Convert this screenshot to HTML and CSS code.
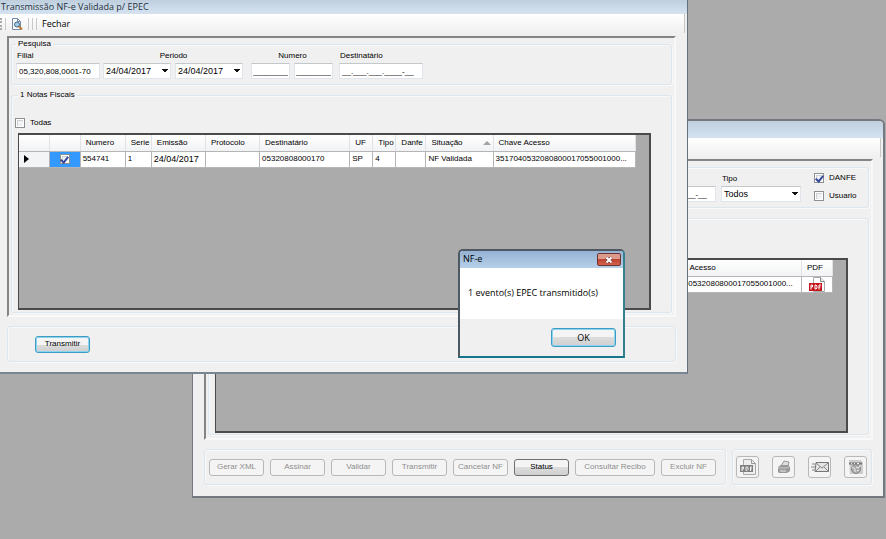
FILE: index.html
```html
<!DOCTYPE html>
<html lang="pt-BR">
<head>
<meta charset="utf-8">
<title>Transmissão NF-e</title>
<link rel="stylesheet" href="styles.css">
</head>
<body>
<main class="desktop">

  <section class="window window-back" aria-label="NF-e">
    <div class="titlebar titlebar-tall"></div>
    <div class="toolbar"></div>
    <div class="panel">
      <div class="group group-plain filters filters-end">
        <input class="text text-long mask-tail" aria-label="Destinatário" value="__.___.___.____-__">
        <div class="field">
          <label for="tipo">Tipo</label>
          <select id="tipo" class="combo combo-wide"><option>Todos</option></select>
        </div>
        <div class="checks">
          <label class="check"><input type="checkbox" checked>DANFE</label>
          <label class="check"><input type="checkbox">Usuario</label>
        </div>
      </div>
      <div class="group group-plain group-back-list">
        <div class="grid">
          <table class="table-end">
            <colgroup><col class="c-chave"><col class="c-pdf"></colgroup>
            <thead><tr><th>Chave Acesso</th><th>PDF</th></tr></thead>
            <tbody><tr>
              <td>3517040532080800017055001000...</td>
              <td class="center">
                <svg class="pdf" viewBox="0 0 16 15" role="img" aria-label="PDF">
                  <path d="M4.500.5h7l4 4v10h-11z" fill="#fff" stroke="#aaa"/>
                  <path d="M11.500.5v4h4" fill="#eee" stroke="#888"/>
                  <path d="M0 6h13v8H0z" fill="#c5161c"/>
                  <path d="M2 12.500V8h1.500v2H2M6 8v4h1l1-1V9L7 8zM10 12.500V8h2M10 10h1.500" fill="none" stroke="#fff"/>
                </svg>
              </td>
            </tr></tbody>
          </table>
        </div>
      </div>
    </div>
    <div class="actions">
      <div class="group group-plain bar">
        <button class="btn" disabled>Gerar XML</button>
        <button class="btn" disabled>Assinar</button>
        <button class="btn" disabled>Validar</button>
        <button class="btn" disabled>Transmitir</button>
        <button class="btn" disabled>Cancelar NF</button>
        <button class="btn">Status</button>
        <button class="btn btn-long" disabled>Consultar Recibo</button>
        <button class="btn" disabled>Excluir NF</button>
      </div>
      <div class="group group-plain bar bar-icons">
        <button class="btn-icon" disabled aria-label="PDF">
          <svg viewBox="0 0 18 18"><path d="M4.500 1.500h8l4 4v11h-12z" fill="#eee" stroke="#aaa"/><path d="M12.500 1.500v4h4" fill="none" stroke="#999"/><path d="M1 7h13v7H1z" fill="#808080"/><path d="M3 13V9h1.500v2H3M7 9v3.500h1l1-1V9.500L8 9zM11.500 13V9H13M11.500 11H13" fill="none" stroke="#eee"/></svg>
        </button>
        <button class="btn-icon" disabled aria-label="Imprimir">
          <svg viewBox="0 0 18 18"><path d="M6 8l3-5 5 1-1 5z" fill="#ddd" stroke="#999"/><path d="M3 9l3-2h7l2 2v4l-3 2H4l-1-1z" fill="#999"/><path d="M3 10h9l3-2" fill="none" stroke="#ccc"/><path d="M5 13h6" stroke="#eee"/></svg>
        </button>
        <button class="btn-icon" disabled aria-label="Enviar e-mail">
          <svg viewBox="0 0 18 18"><path d="M5 4.500h12.500v9H4z" fill="#e4e4e4" stroke="#777"/><path d="M5 5l6 5 6-5M5 13l4-4M17 13l-4-4" fill="none" stroke="#888"/><path d="M1 6h3M0 9h4M1 12h3" stroke="#888"/></svg>
        </button>
        <button class="btn-icon" disabled aria-label="Configurar XML">
          <svg viewBox="0 0 18 18"><path d="M2 2h12l2 3v11H3z" fill="#ccc"/><path d="M2 4.500h13v2H2z" fill="#777"/><path d="M4 5.500h1M7 5.500h1M10 5.500h2" stroke="#eee"/><circle cx="9" cy="11" r="4.500" fill="#aaa" stroke="#888"/><path d="M5 9l3 2v3M9 9l2 1 2-2M10 13l2-1" fill="none" stroke="#eee"/></svg>
        </button>
      </div>
    </div>
  </section>

  <section class="window window-front" aria-label="Transmissão NF-e Validada p/ EPEC">
    <div class="titlebar">Transmissão NF-e Validada p/ EPEC</div>
    <div class="toolbar">
      <span class="grip"></span><span class="sep"></span>
      <button class="tool" aria-label="Pesquisar">
        <svg viewBox="0 0 12 12"><path d="M1.500.5h5l3 3v8h-8z" fill="#fff" stroke="#7289a8"/><path d="M6.500.5v3h3" fill="none" stroke="#7289a8"/><circle cx="6" cy="6.500" r="2.500" fill="#9ed0ee" stroke="#45607c"/><path d="M8 8.500l3 3" stroke="#b9792d" stroke-width="2"/></svg>
      </button>
      <span class="sep"></span><span class="sep"></span><span class="sep"></span>
      <button class="tool">Fechar</button>
    </div>
    <div class="panel">
      <fieldset class="group">
        <legend>Pesquisa</legend>
        <div class="filters">
          <div class="field">
            <label for="filial">Filial</label>
            <input id="filial" class="text text-long" value="05,320,808,0001-70">
          </div>
          <div class="field field-center">
            <label for="de">Periodo</label>
            <div class="pair">
              <select id="de" class="combo"><option>24/04/2017</option></select>
              <select class="combo" aria-label="Periodo até"><option>24/04/2017</option></select>
            </div>
          </div>
          <div class="field field-center field-numero">
            <label for="num">Numero</label>
            <div class="pair">
              <input id="num" class="text text-short" value="________">
              <input class="text text-short" aria-label="Numero até" value="________">
            </div>
          </div>
          <div class="field">
            <label for="dest">Destinatário</label>
            <input id="dest" class="text text-long" value="__.___.___.____-__">
          </div>
        </div>
      </fieldset>
      <fieldset class="group group-list">
        <legend>1 Notas Fiscais</legend>
        <label class="check check-all"><input type="checkbox">Todas</label>
        <div class="grid">
          <table>
            <colgroup><col class="c-mark"><col class="c-sel"><col class="c-num"><col class="c-serie"><col class="c-date"><col class="c-date"><col class="c-dest"><col class="c-uf"><col class="c-uf"><col class="c-danfe"><col class="c-sit"><col class="c-chave"></colgroup>
            <thead><tr><th></th><th></th><th>Numero</th><th>Serie</th><th>Emissão</th><th>Protocolo</th><th>Destinatário</th><th>UF</th><th>Tipo</th><th>Danfe</th><th class="sorted">Situação</th><th>Chave Acesso</th></tr></thead>
            <tbody><tr><td class="mark"><span class="pointer"></span></td><td class="selected"><input type="checkbox" checked aria-label="Selecionar 554741"></td><td>554741</td><td>1</td><td class="date">24/04/2017</td><td></td><td>05320808000170</td><td>SP</td><td>4</td><td></td><td>NF Validada</td><td>3517040532080800017055001000...</td></tr></tbody>
          </table>
        </div>
      </fieldset>
    </div>
    <div class="group group-plain bar bar-front"><button class="btn btn-default">Transmitir</button></div>
  </section>

  <section class="dialog" role="dialog" aria-labelledby="dlg-title">
    <div class="dialog-title"><span id="dlg-title">NF-e</span>
      <button class="close" aria-label="Fechar"><svg viewBox="0 0 10 8"><path d="M2.500 1.500l5 5M7.500 1.500l-5 5" stroke="#5a3030" stroke-width="3"/><path d="M2.500 1.500l5 5M7.500 1.500l-5 5" stroke="#fff" stroke-width="2"/></svg></button>
    </div>
    <p class="dialog-body">1 evento(s) EPEC transmitido(s)</p>
    <div class="dialog-foot"><button class="btn btn-default btn-ok">OK</button></div>
  </section>
</main>
</body>
</html>
```
FILE: styles.css
```css
* { box-sizing: border-box; }

:root {
  --face: #f0f0f0;
  --line: #dce6ec;
  --sans: "Liberation Sans", Arial, sans-serif;
  --ui: "Open Sans", "Noto Sans", sans-serif;
}

body { margin: 0; font: 8px/12px var(--sans); color: #000; }
button, input, select { font: inherit; color: inherit; margin: 0; }
svg { display: block; fill: none; }

.desktop { position: relative; min-height: 100vh; background: #ababab; overflow: hidden; }

/* Windows */
.window { position: absolute; background: var(--face); border: 1px solid #65707c; }
.window-front { left: 0; right: 198px; top: 0; border-width: 0 1px 2px 0; border-bottom-color: #7b8492; }
.window-back { left: 192px; right: 1px; top: 119px; border-width: 2px 2px 2px 1px; border-color: #74797f; border-top-right-radius: 6px; padding-left: 1px; }

.titlebar { height: 14px; padding-left: 1px; font: 9px/13px var(--ui); color: #26313d; background: linear-gradient(#bfcfde, #d5e3f1); }
.titlebar-tall { height: 17px; border-top-right-radius: 4px; }
.toolbar { display: flex; align-items: center; gap: 3px; height: 19px; margin-right: 2px; border-right: 1px solid #c6c6c6; background: linear-gradient(#fff, #f0f0f0); font: 9px/12px var(--ui); }
.grip { width: 2px; height: 12px; border-left: 2px dotted #aaa; }
.sep { width: 1px; height: 12px; background: #c8c8c8; }
.tool { padding: 0 2px; border: 0; background: none; color: #000; }
.tool svg { width: 12px; height: 12px; }

.panel { margin: 3px 11px 0 7px; border: 2px solid #f8f8f8; border-top-color: #848484; border-left-color: #848484; padding: 0 2px; }
.window-back .panel { margin: 2px 10px 0; padding-top: 6px; padding-bottom: 3px; }

/* Group boxes */
.group { margin: 0; padding: 0 4px 5px; border: 1px solid var(--line); border-radius: 3px; box-shadow: inset 1px 1px #f8f8f8, 1px 1px #f8f8f8; min-width: 0; }
.group legend { padding: 0 2px; }
.group-list { margin: 4px 0 2px; padding: 16px 6px 2px; }
.group-back-list { margin-top: 10px; padding: 39px 6px 1px; }

.filters { display: flex; gap: 3px; align-items: flex-end; }
.filters-end { justify-content: flex-end; padding: 4px 10px 5px; gap: 5px; }
.field { display: flex; flex-direction: column; gap: 1px; }
.field label { padding-left: 1px; }
.field-center label { align-self: center; }
.field-numero { margin: 0 3px 0 5px; }
.pair { display: flex; gap: 4px; }
.text, .combo { height: 16px; border: 1px solid #dfe5ea; border-top-color: #c3c8cd; background: #fff; padding: 0 2px; border-radius: 0; }
.text-long { width: 84px; }
.text-short { width: 39px; padding: 0 1px; }
.mask-tail { text-align: right; padding-right: 8px; }
.combo {
  appearance: none;
  width: 68px;
  padding-right: 12px;
  font-size: 9px;
  background-image: linear-gradient(to bottom left, #111 50%, transparent 50%), linear-gradient(to bottom right, #111 50%, transparent 50%);
  background-repeat: no-repeat;
  background-size: 3px 4px;
  background-position: right 5px center, right 2px center;
}
.combo-wide { width: 80px; }
.checks { display: flex; flex-direction: column; gap: 6px; margin-left: 8px; width: 44px; white-space: nowrap; }

.check { display: flex; align-items: center; gap: 5px; }
.check-all { margin: 0 0 4px -3px; }
input[type="checkbox"] { appearance: none; flex: none; display: grid; place-items: center; width: 10px; height: 10px; border: 1px solid #8e8f8f; background: #f0f2f4; box-shadow: inset 0 0 0 1px #fff, inset 2px 2px #ccd1d6; }
input[type="checkbox"]:checked::after { content: ""; width: 3px; height: 6px; border: solid #34479a; border-width: 0 2px 2px 0; transform: rotate(40deg); }

/* Data grids */
.grid { height: 177px; border: 2px solid #4a4a4a; border-left-width: 1px; background: #ababab; margin-right: 14px; overflow: hidden; }
.window-back .grid { height: 175px; }
table { border-collapse: collapse; table-layout: fixed; width: 617px; }
.table-end { width: 173px; margin: 0 13px 0 auto; }
th, td { overflow: hidden; white-space: nowrap; text-align: left; font-weight: normal; border-right: 1px solid #b5b5b5; border-bottom: 1px solid #b5b5b5; }
th { height: 16px; padding: 0 0 0 5px; background: linear-gradient(#fff, #f1f2f4); border-right-color: #e0e2e6; }
td { height: 16px; padding: 0 0 0 2px; background: #fff; }
.date { font-size: 9px; }
.mark { background: #f3f4f6; padding-left: 5px; }
.pointer { display: block; width: 0; border: solid transparent; border-width: 4px 0 4px 5px; border-left-color: #000; }
.selected { background: #3399ff; padding-left: 10px; }
.sorted::after { content: ""; float: right; margin: 4px 2px 0 0; border: solid transparent; border-width: 0 4px 4px; border-bottom-color: #a0a4a8; }
.center { padding: 0; }
.pdf { width: 16px; height: 15px; margin-left: 7px; }
.c-mark { width: 30px; }
.c-sel { width: 31px; }
.c-num { width: 45px; }
.c-serie { width: 26px; }
.c-date { width: 54px; }
.c-dest { width: 90px; }
.c-uf { width: 23px; }
.c-danfe { width: 30px; }
.c-sit { width: 67px; }
.c-chave { width: 142px; }
.c-pdf { width: 31px; }

/* Buttons */
.btn { flex: none; width: 55px; height: 17px; padding: 0; border: 1px solid #707070; border-radius: 3px; background: linear-gradient(#f4f4f4 50%, #dcdcdc 50%, #cfcfcf); white-space: nowrap; }
.btn:disabled, .btn-icon:disabled { background: #f4f4f4; border-color: #b5b9bc; color: #8e8e8e; }
.btn-long { width: 80px; }
.btn-default { border-color: #3c9cc4; box-shadow: inset 0 0 0 1px #8bd3ee; }
.btn-icon { flex: none; display: grid; place-items: center; width: 23px; height: 22px; padding: 0; border: 1px solid; border-radius: 3px; }
.btn-icon svg { width: 18px; height: 18px; }
.bar { display: flex; align-items: center; gap: 6px; height: 36px; padding: 0 4px; }
.bar-front { margin: 9px 11px 10px 7px; padding-left: 27px; }
.actions { display: flex; gap: 6px; margin: 9px 11px 11px 10px; }
.actions .bar:first-child { flex: 1; }
.bar-icons { gap: 13px; padding: 0 4px 0 3px; }

/* Message box */
.dialog { position: absolute; left: 458px; top: 249px; border: 2px solid #4d5862; border-bottom-color: #16758c; border-right-color: #34808f; border-radius: 5px 5px 0 0; background: #fff; font: 9px/12px var(--ui); width: 167px; }
.dialog-title { display: flex; justify-content: space-between; align-items: flex-start; height: 17px; padding: 2px 2px 0 3px; border-radius: 3px 3px 0 0; background: linear-gradient(#94b2d3, #b7d0e9); }
.close { display: grid; place-items: center; width: 24px; height: 13px; padding: 0; border: 1px solid #6d3434; border-radius: 2px; background: linear-gradient(#dd9b8d 50%, #bd4330 50%, #d3634c); }
.close svg { width: 10px; height: 8px; }
.dialog-body { margin: 0; padding: 19px 8px 20px; white-space: nowrap; }
.dialog-foot { display: flex; justify-content: flex-end; padding: 9px 7px; background: var(--face); }
.btn-ok { width: 65px; height: 19px; }
```
